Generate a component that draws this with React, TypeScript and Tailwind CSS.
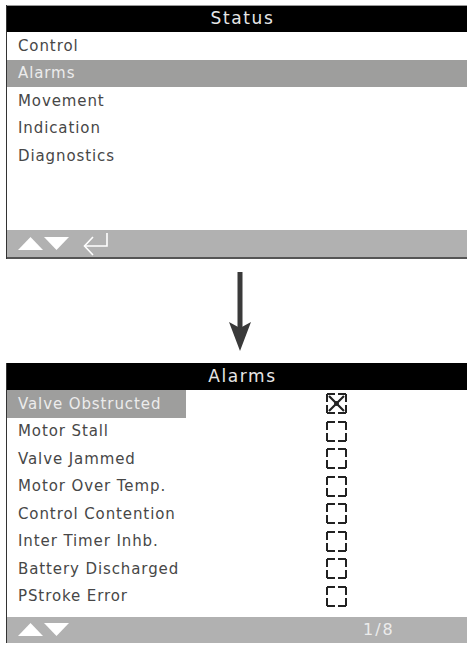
const statusItems = ["Control", "Alarms", "Movement", "Indication", "Diagnostics"];

const alarmItems = [
  { label: "Valve Obstructed", checked: true },
  { label: "Motor Stall", checked: false },
  { label: "Valve Jammed", checked: false },
  { label: "Motor Over Temp.", checked: false },
  { label: "Control Contention", checked: false },
  { label: "Inter Timer Inhb.", checked: false },
  { label: "Battery Discharged", checked: false },
  { label: "PStroke Error", checked: false },
];

const font = { fontFamily: '"DejaVu Sans", "Liberation Sans", sans-serif' };

function UpDown() {
  return (
    <svg width="52" height="14" viewBox="0 0 52 14" className="block">
      <polygon points="0,13 12.5,0 25,13" fill="#fff" />
      <polygon points="26,0 51,0 38.5,13" fill="#fff" />
    </svg>
  );
}

function EnterIcon() {
  return (
    <svg width="28" height="24" viewBox="0 0 28 24" className="block">
      <path d="M25 1 V14 H3" fill="none" stroke="#fff" strokeWidth="1.6" />
      <path d="M11 5 L2.5 14 L11 23" fill="none" stroke="#fff" strokeWidth="1.6" />
    </svg>
  );
}

function CheckBox({ checked }: { checked: boolean }) {
  return (
    <svg width="21" height="21" viewBox="0 0 21 21" className="block">
      <rect
        x="1"
        y="1"
        width="19"
        height="19"
        fill="none"
        stroke="#222"
        strokeWidth="2"
        strokeDasharray="8 3 8 0"
      />
      {checked && (
        <>
          <path d="M3 3 L18 18 M18 3 L3 18" stroke="#222" strokeWidth="2.2" />
          <circle cx="10.5" cy="10.5" r="2.4" fill="#222" />
        </>
      )}
    </svg>
  );
}

export default function App() {
  return (
    <div className="h-[645px] w-[467px] overflow-hidden bg-white text-[#474747]" style={font}>
      <div className="pt-[5px]">
        <section className="ml-[6px] w-[472px] border-l border-[#333]">
          <div className="flex h-[27px] items-center justify-center border-t border-[#999] bg-black text-[17px] tracking-[1.6px] text-[#e6e6e6]">
            Status
          </div>
          <div className="h-[198px]">
            {statusItems.map((item, i) => (
              <div
                key={item}
                className={
                  i === 1
                    ? "flex h-[27.5px] items-center bg-[#9e9e9d] pl-[11px] text-[15px] tracking-[0.9px] text-[#ececec]"
                    : "flex h-[27.5px] items-center pl-[11px] text-[15px] tracking-[0.9px]"
                }
              >
                {item}
              </div>
            ))}
          </div>
          <div className="flex h-[29px] items-center gap-[12px] border-b-2 border-[#555] bg-[#b1b1b1] pl-[11px]">
            <UpDown />
            <EnterIcon />
          </div>
        </section>
      </div>

      <div className="flex h-[104px] justify-center pl-[13px] pt-[13px]">
        <svg width="24" height="80" viewBox="0 0 24 80">
          <rect x="9.5" y="0" width="5" height="56" fill="#3a3a3a" />
          <path d="M1 50 L12 56 L23 50 L12 79 Z" fill="#3a3a3a" />
        </svg>
      </div>

      <section className="ml-[6px] w-[472px] border-l border-[#333]">
        <div className="flex h-[27px] items-center justify-center bg-black text-[17px] tracking-[1.6px] text-[#e6e6e6]">
          Alarms
        </div>
        <div className="h-[227px]">
          {alarmItems.map((item, i) => (
            <div key={item.label} className="flex h-[27.5px] items-center">
              <div
                className={
                  i === 0
                    ? "flex h-full w-[179px] items-center bg-[#9e9e9d] pl-[11px] text-[15px] tracking-[0.9px] text-[#ececec]"
                    : "flex h-full w-[179px] items-center whitespace-nowrap pl-[11px] text-[15px] tracking-[0.9px]"
                }
              >
                {item.label}
              </div>
              <div className="ml-[140px]">
                <CheckBox checked={item.checked} />
              </div>
            </div>
          ))}
        </div>
        <div className="flex h-[26px] items-center bg-[#b1b1b1] pl-[11px]">
          <UpDown />
          <span className="ml-[293px] text-[16px] tracking-[2px] text-[#ececec]">1/8</span>
        </div>
      </section>
    </div>
  );
}
